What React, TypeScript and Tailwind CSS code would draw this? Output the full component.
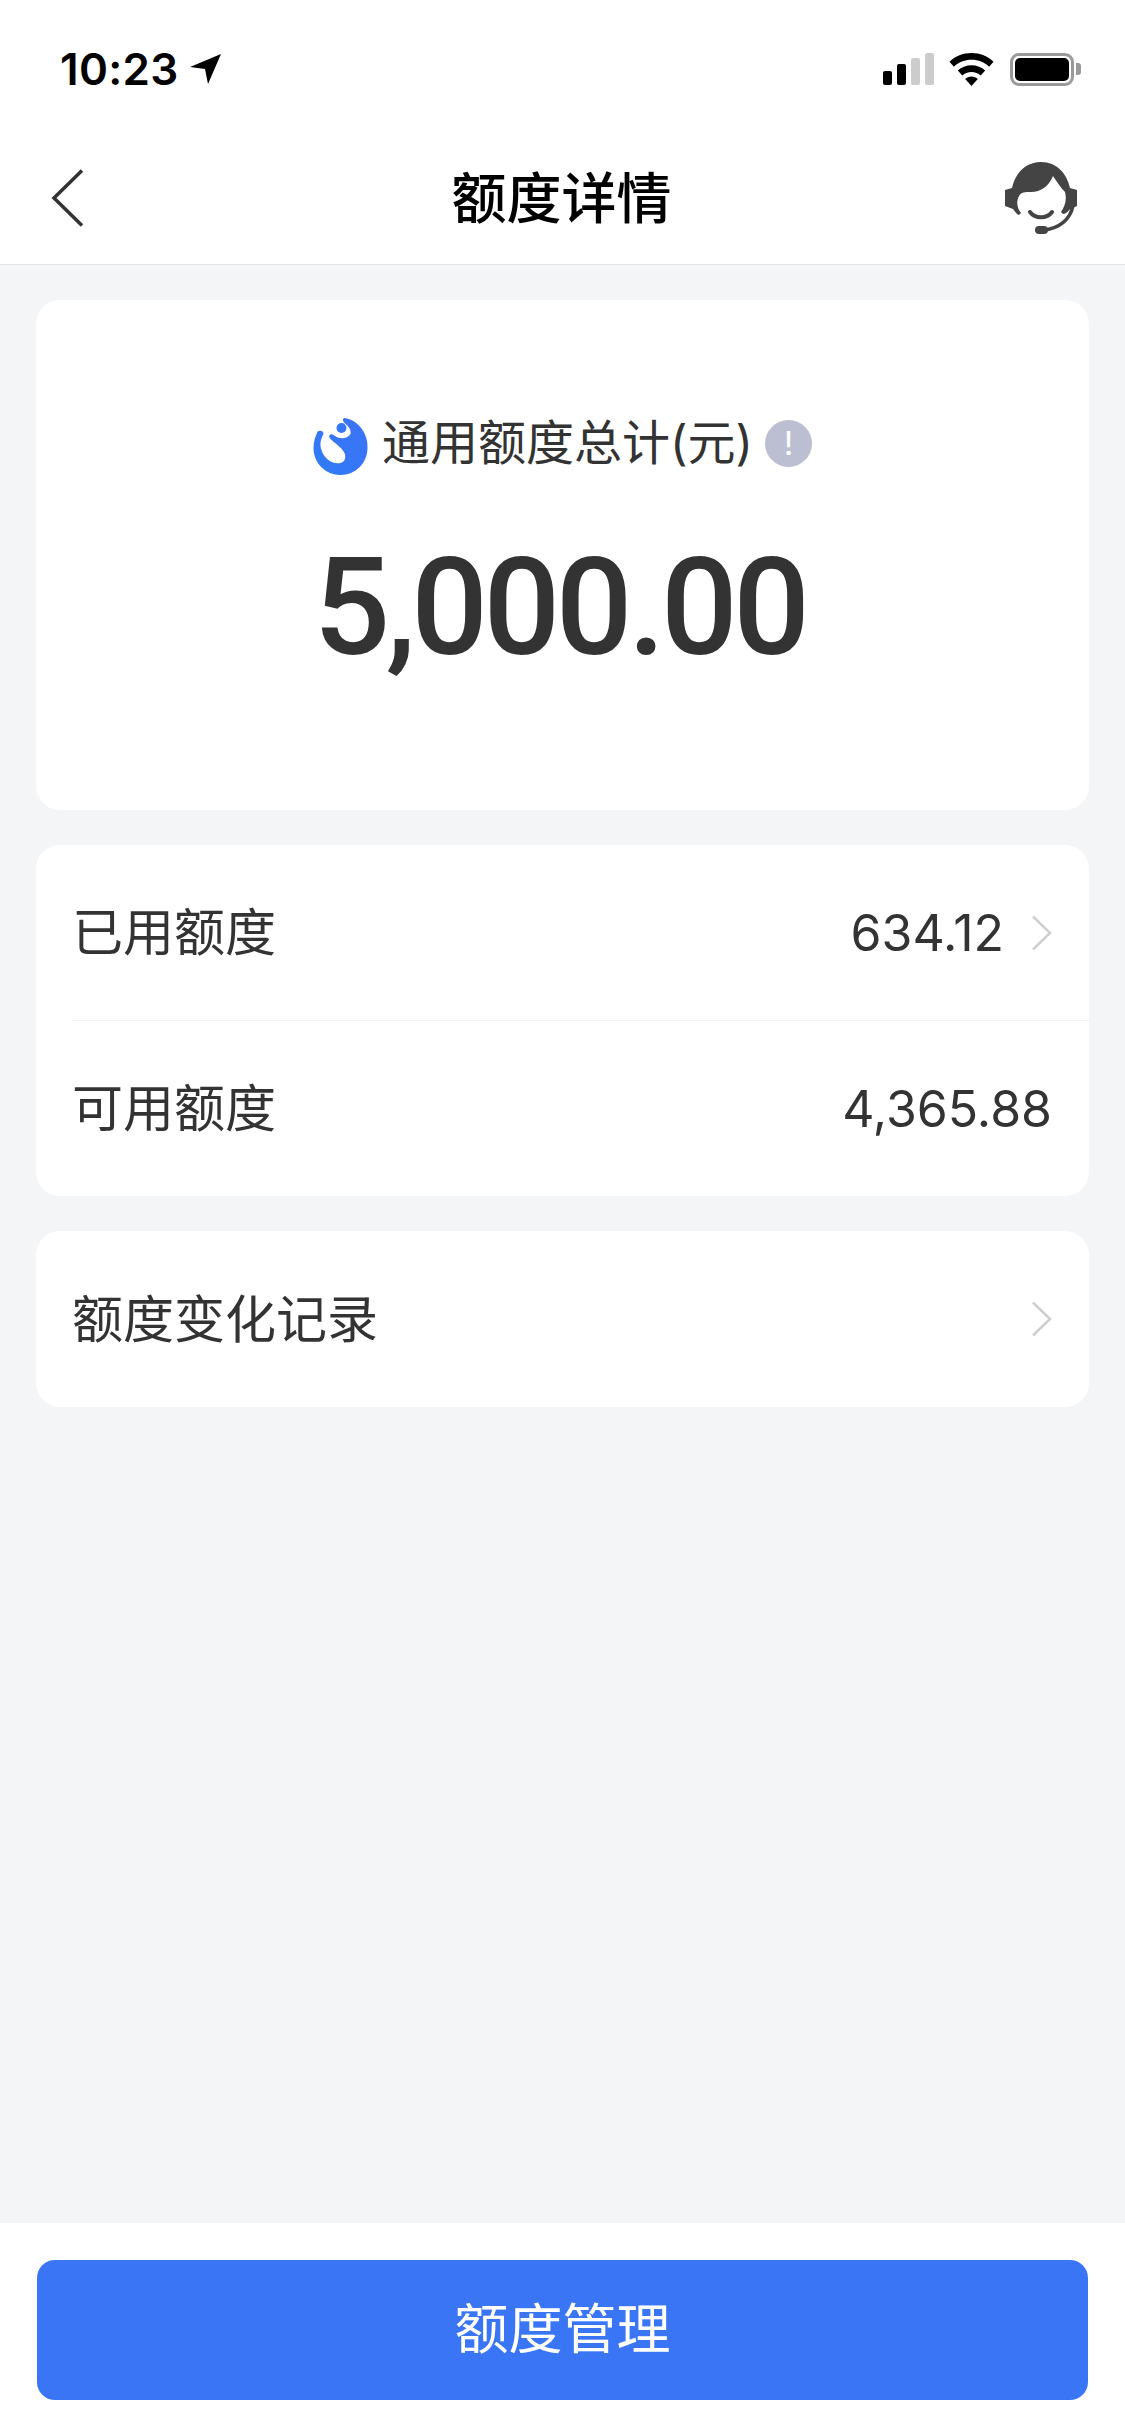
import React from 'react'

const cjk = "font-['Inter','Noto_Sans_CJK_SC',sans-serif]"

function Chevron() {
  return (
    <svg width="21" height="36" viewBox="0 0 21 36" fill="none" className="shrink-0">
      <path d="M2 1.500 19 18 2 34.500" stroke="#cfcfd2" strokeWidth="2.500" />
    </svg>
  )
}

function StatusBar() {
  return (
    <div className="flex h-[132px] items-center justify-between pl-[60px] pr-[44px] pt-[6px]">
      <div className="flex items-center gap-[11px]">
        <span className="font-['Inter',sans-serif] text-[44px] leading-none font-semibold tracking-[0.3px] text-black">
          10:23
        </span>
        <svg width="31" height="30" viewBox="0 0 31 30">
          <path d="M31 0 18 30 15 15 0 13Z" fill="#000" strokeLinejoin="round" />
        </svg>
      </div>
      <div className="flex items-center">
        <div className="flex h-[32px] items-end gap-[5px]">
          <div className="h-[14px] w-[9px] rounded-[2px] bg-black" />
          <div className="h-[21px] w-[9px] rounded-[2px] bg-black" />
          <div className="h-[27px] w-[9px] rounded-[2px] bg-[#cccccc]" />
          <div className="h-[32px] w-[9px] rounded-[2px] bg-[#cccccc]" />
        </div>
        <svg width="45" height="33" viewBox="0 0 45 33" className="ml-[15px]">
          <path
            d="M22.500 0C14 0 6.300 3.300.5 8.700l4.400 5C9.500 9.400 15.700 6.800 22.500 6.800s13 2.600 17.600 6.900l4.400-5C38.700 3.300 31 0 22.500 0Z"
            fill="#000"
          />
          <path
            d="M22.500 12.200c-5.300 0-10.100 2-13.700 5.300l4.500 5c2.400-2.200 5.700-3.500 9.200-3.500s6.800 1.300 9.200 3.500l4.500-5c-3.600-3.300-8.400-5.300-13.700-5.300Z"
            fill="#000"
          />
          <path d="M22.500 33 16.200 26c1.600-1.500 3.900-2.400 6.300-2.400s4.700.9 6.300 2.400Z" fill="#000" />
        </svg>
        <div className="ml-[16px] flex items-center">
          <div className="flex h-[33px] w-[64px] items-center justify-center rounded-[9px] border-[3px] border-[#9a9a9a]">
            <div className="h-[23px] w-[54px] rounded-[5px] bg-black" />
          </div>
          <div className="ml-[2px] h-[12px] w-[5px] rounded-r-[3px] bg-[#9a9a9a]" />
        </div>
      </div>
    </div>
  )
}

function AgentIcon() {
  return (
    <svg width="72" height="72" viewBox="0 0 72 72" fill="none">
      <path
        d="M36 0C52 0 62 12 65 26L72 28V44L64 48C63 50 60 52 58 52L56 50C60 44 62 38 60 30 56 26 52 20 48 14 44 24 36 30 26 30 20 30 16 30 14 34 11 40 12 46 16 51L14 53C11 52 9 48 8 47L0 44V28L7 26C10 12 20 0 36 0Z"
        fill="#444444"
      />
      <path d="M25 50c5 7 17 7 22 0" stroke="#444444" strokeWidth="4" strokeLinecap="round" />
      <path d="M68 43C66 57 54 67 38 68" stroke="#444444" strokeWidth="3.500" />
      <rect x="30" y="64" width="13" height="8" rx="4" fill="#444444" />
    </svg>
  )
}

function NavBar() {
  return (
    <div className="grid h-[133px] grid-cols-[1fr_auto_1fr] items-center border-b border-[#e2e2e4] pl-[48px] pr-[50px]">
      <svg width="33" height="58" viewBox="0 0 33 58" fill="none" className="ml-[3px]">
        <path d="M31 1.500 3 29l28 27.500" stroke="#333333" strokeWidth="3.500" />
      </svg>
      <h1 className={`${cjk} text-[55px] leading-none font-medium text-black`}>额度详情</h1>
      <div className="-mr-[2px] flex justify-end">
        <AgentIcon />
      </div>
    </div>
  )
}

function Logo() {
  return (
    <svg width="56" height="59" viewBox="13 14 55 59" className="mt-[6px] shrink-0">
      <defs>
        <linearGradient id="logoFill" x1="0" y1="1" x2="1" y2="0">
          <stop offset="0" stopColor="#2f7cf8" />
          <stop offset="1" stopColor="#3d72f5" />
        </linearGradient>
      </defs>
      <path
        d="M44 15C58 17 68 31 67 45 67 60 55 72 40 72 25 72 13 60 13 45 13 38 15 33 17 29 18 27 23 27 23 31 20 36 19 42 21 47 23 55 32 62 40 60 44 59 46 55 44 50 42 45 34 40 30 36 27 33 30 30 33 32 38 36 46 37 50 31 51 27 48 23 44 20 42 18 42 15 44 15Z"
        fill="url(#logoFill)"
      />
      <circle cx="41" cy="25" r="5" fill="url(#logoFill)" />
    </svg>
  )
}

function TotalCard() {
  return (
    <div className="flex h-[510px] flex-col items-center rounded-[24px] bg-white pt-[113px]">
      <div className="flex h-[60px] items-center">
        <Logo />
        <span className={`${cjk} ml-[13px] text-[48px] leading-none text-[#333333]`}>通用额度总计(元)</span>
        <span className="ml-[12px] flex h-[47px] w-[47px] items-center justify-center rounded-full bg-[#bcbfd1] font-['Inter',sans-serif] text-[33px] leading-none text-white">
          !
        </span>
      </div>
      <div className="mt-[68px] mr-[6px] font-['Roboto',sans-serif] text-[135px] leading-none font-medium tracking-[-4.5px] text-[#333333]">
        5,000.00
      </div>
    </div>
  )
}

function Row({ label, value, arrow, className }: { label: string; value?: string; arrow?: boolean; className?: string }) {
  return (
    <div className={`flex items-center justify-between pl-[36px] pr-[37px] ${className ?? ''}`}>
      <span className={`${cjk} text-[51px] leading-none text-[#333333]`}>{label}</span>
      <div className="flex items-center gap-[27px]">
        {value && <span className="font-['Inter',sans-serif] text-[50px] leading-none text-[#333333]">{value}</span>}
        {arrow && <Chevron />}
      </div>
    </div>
  )
}

export default function App() {
  return (
    <div className="flex h-[2436px] w-[1125px] flex-col bg-[#f4f5f7]">
      <div className="bg-white">
        <StatusBar />
        <NavBar />
      </div>
      <main className="flex flex-1 flex-col gap-[35px] px-[36px] pt-[35px]">
        <TotalCard />
        <div className="rounded-[24px] bg-white">
          <Row label="已用额度" value="634.12" arrow className="h-[175px]" />
          <div className="ml-[36px] h-px bg-[#f2f2f4]" />
          <Row label="可用额度" value="4,365.88" className="h-[175px]" />
        </div>
        <div className="rounded-[24px] bg-white">
          <Row label="额度变化记录" arrow className="h-[176px]" />
        </div>
      </main>
      <footer className="h-[213px] bg-white px-[37px] pt-[37px]">
        <button className={`${cjk} h-[140px] w-full rounded-[18px] bg-[#3a75f6] text-[54px] leading-none text-white`}>
          额度管理
        </button>
      </footer>
    </div>
  )
}
